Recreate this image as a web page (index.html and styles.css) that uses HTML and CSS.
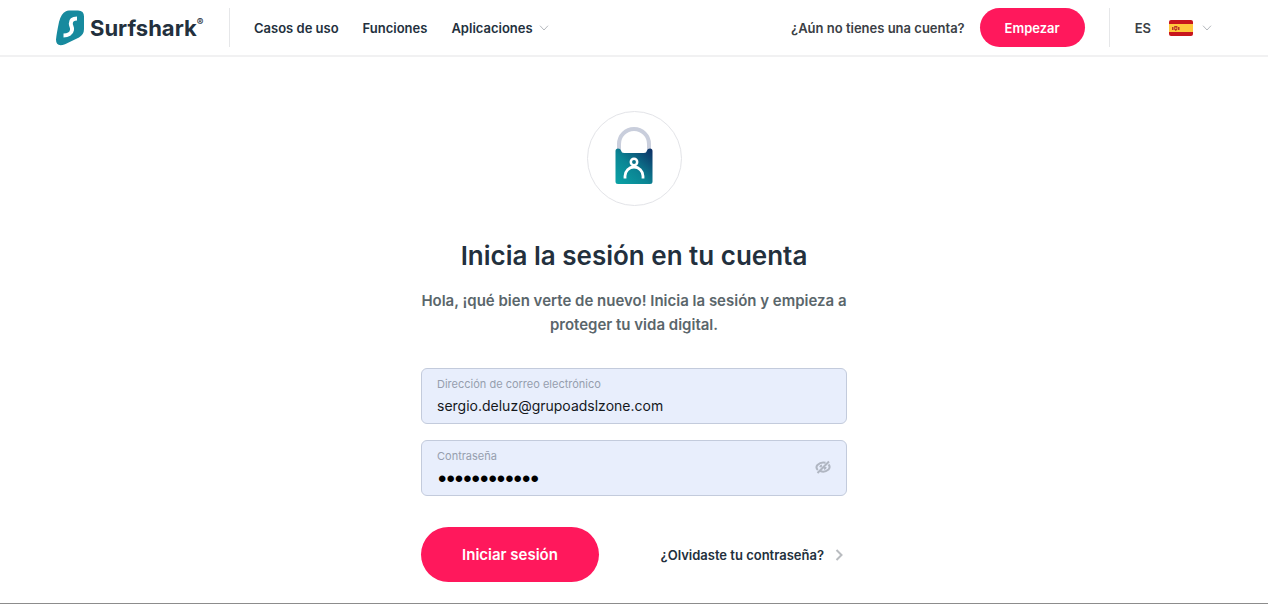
FILE: index.html
```
<!DOCTYPE html>
<html lang="es">
<head>
  <meta charset="UTF-8" />
  <meta name="viewport" content="width=device-width, initial-scale=1.0" />
  <title>Surfshark - Iniciar sesión</title>
  <link rel="stylesheet" href="styles.css">
</head>
<body>
  <header class="header">
    <a class="logo" href="#" aria-label="Surfshark">
      <svg class="logo-mark" viewBox="0 0 28 36" aria-hidden="true">
        <path fill="#178a9e" d="M10 1.200 Q11 .5 13 .5 H22 Q28 .5 28 6.500 V19 Q28 24.500 23 27.500 L9 34.300 Q0 37.500 0 29.500 Q.5 24 3 12 Q5 3.500 10 1.200Z" />
        <path fill="none" stroke="#fff" stroke-width="4" d="M21 8.500 C16.500 8.500 14.800 10.500 14.800 13.500 C14.800 16.500 16.500 16.500 16 20 C15.500 23.500 12 25.500 7.500 25.500" />
      </svg>
      <span class="logo-name">Surfshark</span>
      <span class="logo-reg">®</span>
    </a>
    <nav class="nav">
      <a href="#">Casos de uso</a>
      <a href="#">Funciones</a>
      <a href="#">Aplicaciones
        <svg class="chevron" viewBox="0 0 10 6" aria-hidden="true"><path d="M1 .7 L5 5 L9 .7" /></svg>
      </a>
    </nav>
    <div class="signup">
      <span>¿Aún no tienes una cuenta?</span>
      <button class="btn btn-small" type="button">Empezar</button>
    </div>
    <button class="lang" type="button">
      <span>ES</span>
      <svg class="flag" viewBox="0 0 24 16" aria-hidden="true">
        <clipPath id="flag-shape"><rect width="24" height="16" rx="2" /></clipPath>
        <g clip-path="url(#flag-shape)">
          <rect width="24" height="16" fill="#c8161d" />
          <rect y="4" width="24" height="8" fill="#ffc83d" />
          <path fill="#b8322a" d="M3 7h1.500v3H3z M9 7h1.500v3H9z M5.200 6h3.200v3.500L6.800 11 5.200 9.500z" />
          <rect x="6.200" y="7.500" width="1.200" height="1.500" fill="#ffc83d" />
        </g>
      </svg>
      <svg class="chevron" viewBox="0 0 10 6" aria-hidden="true"><path d="M1 .7 L5 5 L9 .7" /></svg>
    </button>
  </header>

  <main class="login">
    <div class="badge">
      <svg viewBox="0 0 40 60" aria-hidden="true">
        <defs>
          <linearGradient id="lock-fill" x1="0" y1="1" x2="1" y2="0">
            <stop offset="0" stop-color="#0aa3a6" />
            <stop offset=".45" stop-color="#0b8594" />
            <stop offset="1" stop-color="#0d2c63" />
          </linearGradient>
        </defs>
        <path fill="none" stroke="#c9cedc" stroke-width="4" d="M5 25 V18 A15 15 0 0 1 35 18 V25" />
        <path fill="url(#lock-fill)" d="M1.500 25 Q1.500 22.500 4 22.500 Q6.500 22.500 7 24.500 Q7.500 27 10 27 H30 Q32.500 27 33 24.500 Q33.500 22.500 36 22.500 Q38.500 22.500 38.500 25 V55.500 Q38.500 58 36 58 H4 Q1.500 58 1.500 55.500Z" />
        <circle cx="20" cy="36" r="3.200" fill="none" stroke="#fff" stroke-width="2.500" />
        <path fill="none" stroke="#fff" stroke-width="2.800" d="M11 52.500 V50 A9 9 0 0 1 29 50 V52.500" />
      </svg>
    </div>
    <h1>Inicia la sesión en tu cuenta</h1>
    <p class="intro">Hola, ¡qué bien verte de nuevo! Inicia la sesión y empieza a proteger tu vida digital.</p>

    <form class="form">
      <div class="field">
        <div class="field-text">
          <label for="email">Dirección de correo electrónico</label>
          <input id="email" type="email" value="sergio.deluz@grupoadslzone.com">
        </div>
      </div>
      <div class="field">
        <div class="field-text">
          <label for="password">Contraseña</label>
          <input id="password" type="password" value="contrasena12">
        </div>
        <button class="toggle" type="button" aria-label="Mostrar contraseña">
          <svg viewBox="0 0 16 14" aria-hidden="true">
            <path d="M2.800 10 Q.3 7.500 2.500 5 Q6 1.500 10.500 2.800 M13.500 4.500 Q15.700 7 13.500 9.500 Q10 12.500 5.800 11.300 M2.500 13 L14 1.500 M5.200 7.300 Q5.500 5.800 7 5.500 M10.800 7 Q10.500 8.500 9 9" />
          </svg>
        </button>
      </div>
      <div class="actions">
        <button class="btn btn-large" type="submit">Iniciar sesión</button>
        <a class="forgot" href="#">¿Olvidaste tu contraseña?
          <svg viewBox="0 0 8 12" aria-hidden="true"><path d="M1.500 1 L6.500 6 L1.500 11" /></svg>
        </a>
      </div>
    </form>
  </main>
</body>
</html>
```

FILE: styles.css
```
* { box-sizing: border-box; }
body {
  margin: 0;
  min-height: 100vh;
  background: #fff;
  border-bottom: 1px solid #8c8c8c;
  color: #23303d;
  font-family: Inter, "Liberation Sans", sans-serif;
  font-size: 13px;
  font-weight: 600;
}
a { color: inherit; text-decoration: none; }
button, input { font-family: inherit; }
button { cursor: pointer; }

.header {
  display: flex;
  align-items: center;
  height: 57px;
  padding: 0 56px;
  border-bottom: 2px solid #f1f1f2;
}
.logo {
  display: flex;
  align-items: center;
  width: 149px;
}
.logo-mark { width: 28px; height: 36px; }
.logo-name {
  margin-left: 6px;
  font-size: 22px;
  font-weight: 700;
}
.logo-reg {
  align-self: flex-start;
  margin-top: 6px;
  font-size: 10px;
  line-height: 12px;
}
.nav {
  display: flex;
  align-items: center;
  gap: 24px;
  height: 39px;
  margin-left: 24px;
  padding-left: 24px;
  border-left: 1px solid #e6e7e9;
}
.chevron {
  width: 10px;
  height: 6px;
  fill: none;
  stroke: #b4b8bd;
  stroke-width: 1;
}
.nav a {
  display: flex;
  align-items: center;
  gap: 6px;
}
.signup {
  display: flex;
  align-items: center;
  gap: 15px;
  margin-left: auto;
  color: #3b4045;
}
.btn {
  border: 0;
  border-radius: 28px;
  background: #ff185c;
  color: #fff;
  font-weight: 600;
}
.btn-small {
  min-width: 105px;
  height: 39px;
  font-size: 13px;
}
.lang {
  display: flex;
  align-items: center;
  height: 39px;
  margin-left: 24px;
  padding: 0 0 0 25px;
  border: 0;
  border-left: 1px solid #e6e7e9;
  background: none;
  color: #3b4045;
  font-size: 13px;
  font-weight: 600;
}
.flag { width: 24px; height: 16px; margin: 0 9px 0 18px; }

.login {
  display: flex;
  flex-direction: column;
  align-items: center;
  width: 100%;
  max-width: 426px;
  margin: 0 auto;
  padding: 54px 0 21px;
}
.badge {
  display: flex;
  justify-content: center;
  width: 95px;
  height: 95px;
  padding-top: 14px;
  border: 1px solid #e3e4e8;
  border-radius: 50%;
}
.badge svg { width: 40px; height: 60px; }
h1 {
  margin: 32px 0 0;
  font-size: 26px;
  font-weight: 600;
  line-height: 36px;
  white-space: nowrap;
}
.intro {
  margin: 15px 0 0;
  color: #5a666b;
  font-size: 15px;
  line-height: 24px;
  text-align: center;
}
.form {
  display: flex;
  flex-direction: column;
  gap: 16px;
  width: 100%;
  margin-top: 31px;
}
.field {
  display: flex;
  align-items: center;
  height: 56px;
  padding: 3px 15px 0;
  border: 1px solid #c3cbdc;
  border-radius: 6px;
  background: #e8eefc;
}
.field-text {
  display: flex;
  flex-direction: column;
  flex: 1;
}
.field label {
  color: #969eae;
  font-size: 11px;
  font-weight: 400;
  line-height: 16px;
}
.field input {
  width: 100%;
  height: 28px;
  padding: 0;
  border: 0;
  outline: 0;
  background: none;
  color: #15181c;
  font-size: 14px;
}
.field input[type="password"] {
  padding: 2px 0 0 1px;
  color: #000;
  font-family: "Liberation Sans", sans-serif;
  font-size: 24px;
}
.toggle {
  display: flex;
  padding: 0 0 5px;
  border: 0;
  background: none;
}
.toggle svg {
  width: 16px;
  height: 14px;
  fill: none;
  stroke: #b0b6c2;
  stroke-width: 2;
}
.actions {
  display: flex;
  justify-content: space-between;
  align-items: center;
  margin-top: 15px;
}
.btn-large {
  width: 178px;
  height: 55px;
  font-size: 15px;
}
.forgot {
  display: flex;
  align-items: center;
  gap: 11px;
  padding-right: 4px;
  font-size: 13px;
}
.forgot svg {
  width: 8px;
  height: 12px;
  fill: none;
  stroke: #b9bcc0;
  stroke-width: 2;
}
```
